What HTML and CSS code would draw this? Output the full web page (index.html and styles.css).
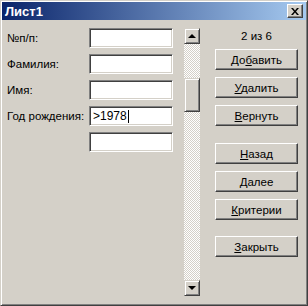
FILE: index.html
```html
<!DOCTYPE html>
<html lang="ru">
<head>
    <meta charset="UTF-8">
    <title>Лист1</title>
    <link rel="stylesheet" href="styles.css">
</head>
<body>
    <div class="window">
        <div class="titlebar">
            <span class="title">Лист1</span>
            <button class="close-btn" aria-label="Закрыть">
                <svg width="8" height="7" viewBox="0 0 8 7">
                    <path d="M0 0h2l2 2.5L6 0h2L5 3.5 8 7H6L4 4.5 2 7H0l3-3.5z" fill="#000"/>
                </svg>
            </button>
        </div>
        <div class="content">
            <div class="form">
                <div class="row">
                    <label>№п/п:</label>
                    <div class="field"></div>
                </div>
                <div class="row">
                    <label>Фамилия:</label>
                    <div class="field"></div>
                </div>
                <div class="row">
                    <label>Имя:</label>
                    <div class="field"></div>
                </div>
                <div class="row">
                    <label>Год рождения:</label>
                    <div class="field">&gt;1978<span class="caret"></span></div>
                </div>
                <div class="row">
                    <label></label>
                    <div class="field"></div>
                </div>
            </div>
            <div class="scrollbar">
                <div class="scroll-btn"><span class="arrow-up"></span></div>
                <div class="track track-top"></div>
                <div class="thumb"></div>
                <div class="track track-bottom"></div>
                <div class="scroll-btn"><span class="arrow-down"></span></div>
            </div>
            <div class="actions">
                <div class="counter">2 из 6</div>
                <button class="btn">До<u>б</u>авить</button>
                <button class="btn"><u>У</u>далить</button>
                <button class="btn"><u>В</u>ернуть</button>
                <button class="btn group"><u>Н</u>азад</button>
                <button class="btn"><u>Д</u>алее</button>
                <button class="btn"><u>К</u>ритерии</button>
                <button class="btn last"><u>З</u>акрыть</button>
            </div>
        </div>
    </div>
</body>
</html>
```

FILE: styles.css
```css
body {
    margin: 0;
    padding: 0;
    background-color: #d4d0c8;
    font-family: "Liberation Sans", Arial, sans-serif;
    font-size: 11.5px;
    color: #000;
}

.window {
    width: 308px;
    height: 306px;
    box-sizing: border-box;
    padding: 1px;
    background-color: #d4d0c8;
    border: 1px solid;
    border-color: #d4d0c8 #404040 #404040 #d4d0c8;
    box-shadow: inset 1px 1px #fff, inset -1px -1px #808080;
    display: flex;
    flex-direction: column;
}

.titlebar {
    height: 18px;
    background: linear-gradient(to right, #0a246a, #a6caf0);
    display: flex;
    align-items: center;
    justify-content: space-between;
    padding: 0 3px 0 3px;
}

.title {
    color: #fff;
    font-weight: bold;
    font-size: 13px;
}

.close-btn {
    width: 16px;
    height: 14px;
    padding: 0;
    margin: 0;
    background-color: #d4d0c8;
    border: 1px solid;
    border-color: #fff #404040 #404040 #fff;
    box-shadow: inset -1px -1px #808080;
    display: flex;
    align-items: center;
    justify-content: center;
}

.content {
    flex: 1;
    display: flex;
    padding: 8px 0 0 5px;
}

.form {
    width: 166px;
}

.row {
    display: flex;
    align-items: center;
    height: 20px;
    margin-bottom: 6px;
}

.row label {
    width: 82px;
}

.field {
    width: 84px;
    height: 20px;
    box-sizing: border-box;
    background-color: #fff;
    border: 1px solid;
    border-color: #808080 #fff #fff #808080;
    box-shadow: inset 1px 1px #404040, inset -1px -1px #d4d0c8;
    padding: 3px 0 0 3px;
    font-size: 12px;
    line-height: 13px;
    display: flex;
}

.caret {
    width: 1px;
    height: 13px;
    background-color: #000;
    margin-left: 1px;
}

.scrollbar {
    margin-left: 11px;
    width: 16px;
    height: 268px;
    display: flex;
    flex-direction: column;
}

.scroll-btn,
.thumb {
    box-sizing: border-box;
    background-color: #d4d0c8;
    border: 1px solid;
    border-color: #d4d0c8 #404040 #404040 #d4d0c8;
    box-shadow: inset 1px 1px #fff, inset -1px -1px #808080;
}

.scroll-btn {
    height: 16px;
    display: flex;
    align-items: center;
    justify-content: center;
}

.arrow-up {
    width: 0;
    height: 0;
    border-left: 4px solid transparent;
    border-right: 4px solid transparent;
    border-bottom: 4px solid #000;
}

.arrow-down {
    width: 0;
    height: 0;
    border-left: 4px solid transparent;
    border-right: 4px solid transparent;
    border-top: 4px solid #000;
}

.track {
    background-color: #d4d0c8;
    background-image: conic-gradient(#fff 25%, #d4d0c8 0 50%, #fff 0 75%, #d4d0c8 0);
    background-size: 2px 2px;
}

.track-top {
    height: 34px;
}

.thumb {
    height: 34px;
}

.track-bottom {
    flex: 1;
}

.actions {
    margin-left: 15px;
    width: 83px;
    display: flex;
    flex-direction: column;
}

.counter {
    height: 21px;
    line-height: 17px;
    text-align: center;
}

.btn {
    height: 21px;
    margin: 0 0 7px;
    padding: 0;
    font-family: inherit;
    font-size: 11.5px;
    color: #000;
    background-color: #d4d0c8;
    border: 1px solid;
    border-color: #fff #404040 #404040 #fff;
    box-shadow: inset -1px -1px #808080;
}

.btn.group {
    margin-top: 10px;
}

.btn.last {
    margin-top: 9px;
}
```
